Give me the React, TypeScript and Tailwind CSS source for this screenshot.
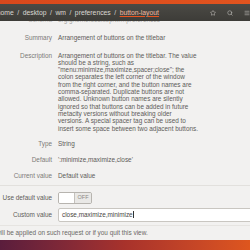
import React from 'react';
import { Star, Search, Menu } from 'lucide-react';

const descriptionLines = [
  'Arrangement of buttons on the titlebar. The value',
  'should be a string, such as',
  '"menu:minimize,maximize,spacer;close"; the',
  'colon separates the left corner of the window',
  'from the right corner, and the button names are',
  'comma-separated. Duplicate buttons are not',
  'allowed. Unknown button names are silently',
  'ignored so that buttons can be added in future',
  'metacity versions without breaking older',
  'versions. A special spacer tag can be used to',
  'insert some space between two adjacent buttons.',
];

const Row: React.FC<{ label: string; className?: string; children: React.ReactNode }> = ({ label, className, children }) => (
  <div className={`flex items-start ${className || ''}`}>
    <div className="w-[52px] shrink-0 text-right text-[#7d7b78]">{label}</div>
    <div className="ml-[6px] text-[#5e5c59]">{children}</div>
  </div>
);

const App: React.FC = () => {
  return (
    <div
      className="w-[250px] h-[250px] overflow-hidden flex flex-col bg-[#f2f1f0] text-[6.4px] leading-[7.3px]"
      style={{ fontFamily: '"Liberation Sans", Arial, sans-serif' }}
    >
      {/* wallpaper strip above window */}
      <div className="h-[4px] shrink-0 bg-linear-to-r from-[#d9481c] to-[#e1541f]" />

      {/* header bar */}
      <div className="h-[17px] shrink-0 flex items-center bg-linear-to-b from-[#4b4a45] to-[#3d3c38] text-[#d9d7d3] text-[6.8px]">
        <div className="flex items-center gap-[3.5px] -ml-[7px] whitespace-nowrap">
          <span>gnome</span><span>/</span>
          <span>desktop</span><span>/</span>
          <span>wm</span><span>/</span>
          <span>preferences</span><span>/</span>
          <span className="text-[#efb8a0] underline decoration-[#e95420] underline-offset-[1px]">button-layout</span>
        </div>
        <div className="ml-auto flex items-center gap-[11px] text-[#cfcdc9]">
          <Star size={6} strokeWidth={2} />
          <Search size={6} strokeWidth={2} />
          <Menu size={6} strokeWidth={2} />
        </div>
      </div>

      {/* scrolled content */}
      <div className="flex-1 overflow-hidden">
        <div className="-mt-[5px]">
          <Row label="Schema" className="opacity-50">org.gnome.desktop.wm.preferences</Row>
          <Row label="Summary" className="mt-[11px]">Arrangement of buttons on the titlebar</Row>
          <Row label="Description" className="mt-[10px]">
            {descriptionLines.map((line) => (
              <div key={line} className="whitespace-nowrap">{line}</div>
            ))}
          </Row>
          <Row label="Type" className="mt-[8px]">String</Row>
          <Row label="Default" className="mt-[9px]">':minimize,maximize,close'</Row>
          <Row label="Current value" className="mt-[9px]">Default value</Row>
        </div>

        <div className="mt-[5px] border-t border-[#e2e0dd]" />

        <div className="flex items-center mt-[6px]">
          <div className="w-[52px] shrink-0 text-right text-[#5e5c59]">Use default value</div>
          <div className="ml-[6px] flex w-[34px] h-[12px] rounded-[2px] border border-[#b7b4af] overflow-hidden">
            <div className="w-[16px] bg-white border-r border-[#c4c1bc]" />
            <div className="flex-1 flex items-center justify-center bg-[#e9e8e6] text-[#8b8884] text-[5.5px]">OFF</div>
          </div>
        </div>

        <div className="flex items-center mt-[4px]">
          <div className="w-[52px] shrink-0 text-right text-[#5e5c59]">Custom value</div>
          <div className="ml-[6px] flex-1 -mr-[2px] h-[14px] flex items-center px-[3px] bg-white border border-[#c9c6c1] rounded-[2px] text-[#4a4845]">
            close,maximize,minimize
            <span className="inline-block w-[1px] h-[7px] bg-[#333]" />
          </div>
        </div>

        <div className="mt-[3px] border-t border-[#e6e4e1]" />
        <div className="mt-[3px] -ml-[4px] text-[#6a6865] whitespace-nowrap">
          will be applied on such request or if you quit this view.
        </div>
      </div>

      {/* wallpaper strip below window */}
      <div className="h-[10px] shrink-0 bg-linear-to-r from-[#5a1d3c] via-[#a8322b] to-[#de561e]" />
    </div>
  );
};

export default App;
